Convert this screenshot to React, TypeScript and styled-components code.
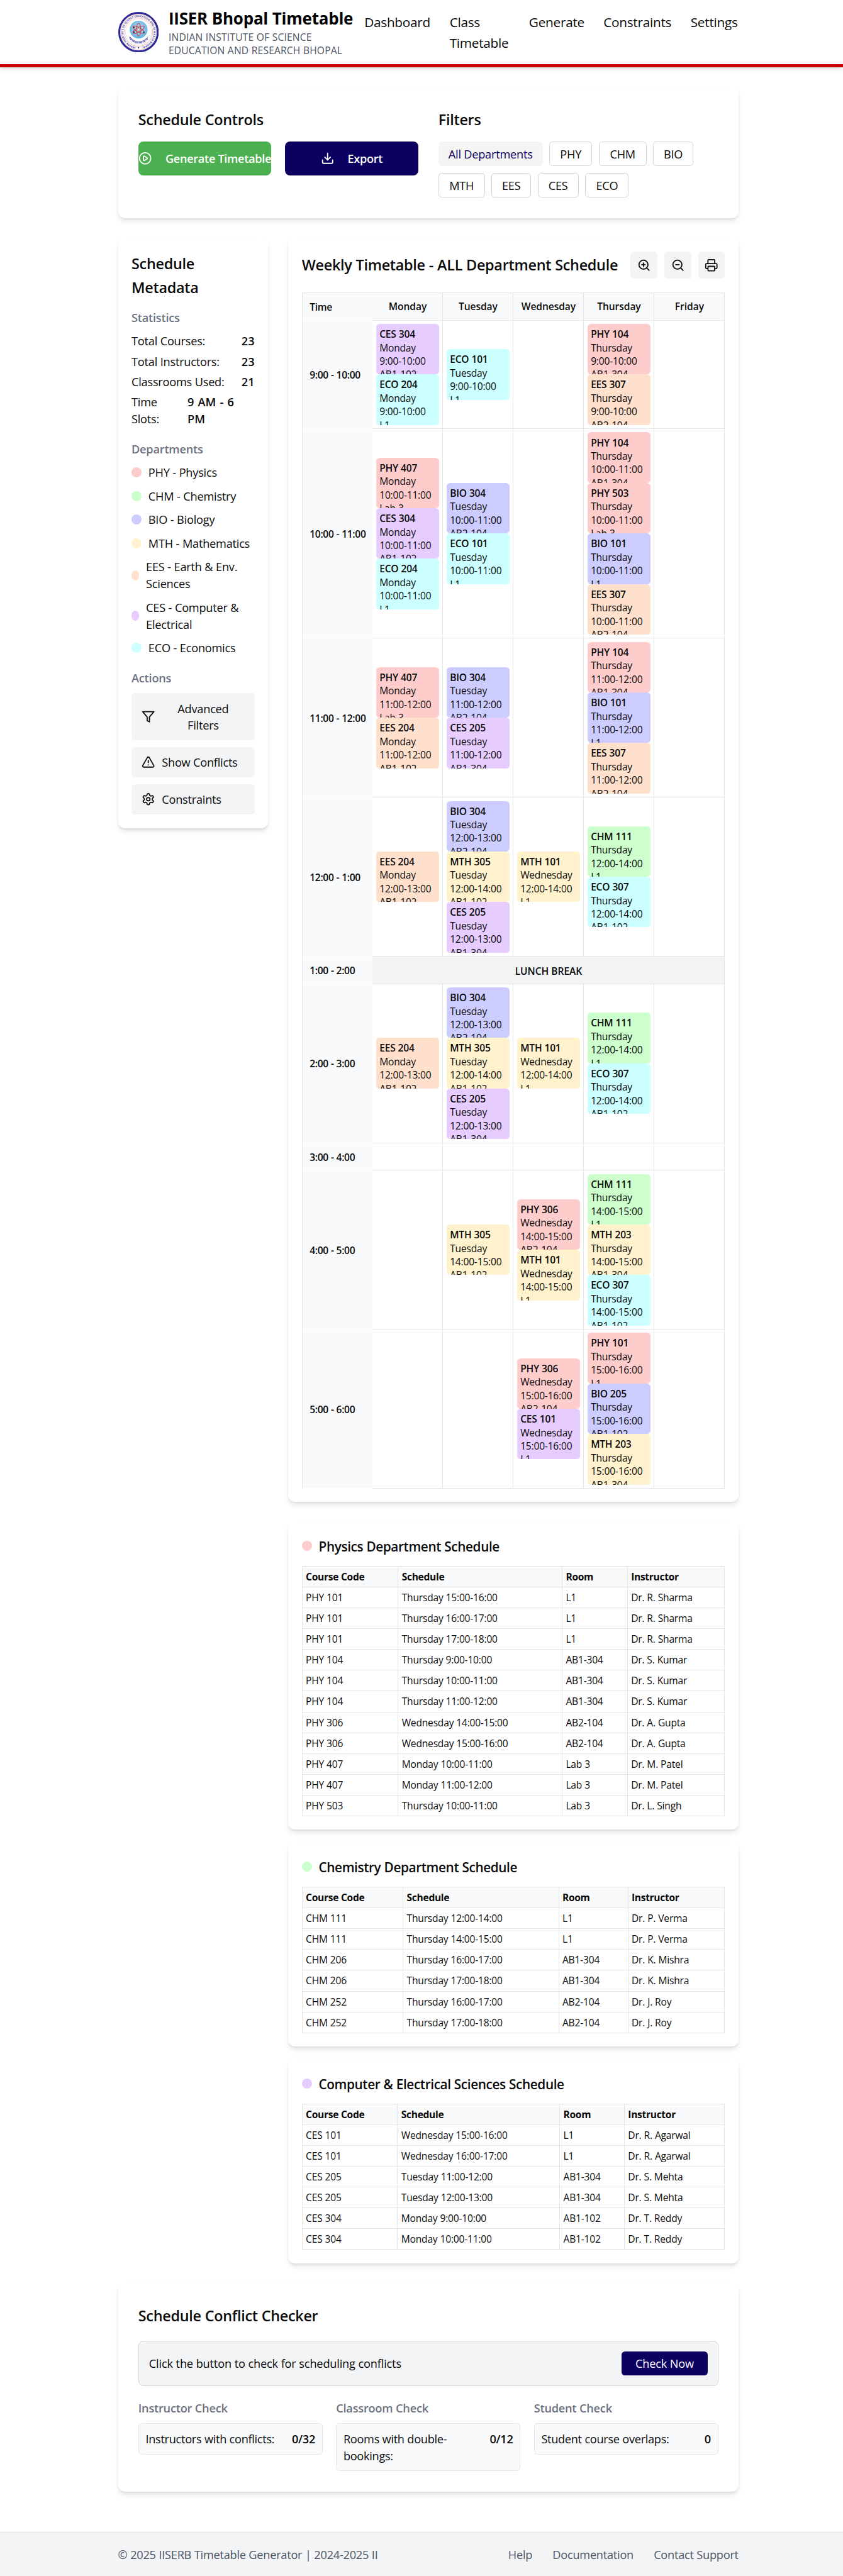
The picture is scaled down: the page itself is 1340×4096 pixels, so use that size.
import React from "react";
import styled, { createGlobalStyle, css } from "styled-components";
import { CirclePlay, Download, Printer, TriangleAlert, ZoomIn, ZoomOut } from "lucide-react";

const color = {
  ink: "#0a0a0a",
  navy: "#0c0060",
  red: "#cc0000",
  green: "#4caf50",
  muted: "#6b7280",
  slate: "#4b5563",
  panel: "#f3f4f6",
  soft: "#f9fafb",
  line: "#e5e5e5",
  border: "#d1d5db",
};

type Dept = "PHY" | "CHM" | "BIO" | "MTH" | "EES" | "CES" | "ECO";

const deptColor: Record<Dept, string> = {
  PHY: "#ffcccc",
  CHM: "#ccffcc",
  BIO: "#ccccff",
  MTH: "#fff2cc",
  EES: "#ffe0cc",
  CES: "#e6ccff",
  ECO: "#ccffff",
};

const type = (size: number, line: number, weight = 400, tracking = -0.013) => css`
  font-size: ${size * 0.97}px;
  line-height: ${line}px;
  font-weight: ${weight};
  letter-spacing: ${tracking}em;
`;

const shadow = css`
  box-shadow: 0 4px 6px -1px rgba(0, 0, 0, 0.1), 0 2px 4px -2px rgba(0, 0, 0, 0.1);
`;

const GlobalStyle = createGlobalStyle`
  *, *::before, *::after { box-sizing: border-box; }
  body {
    margin: 0;
    background: #fff;
    color: ${color.ink};
    font-family: "Open Sans", "Noto Sans", sans-serif;
    word-spacing: 0.01em;
  }
  h1, h2, h3, p, ul { margin: 0; padding: 0; }
  button { font: inherit; letter-spacing: inherit; color: inherit; border: 0; margin: 0; padding: 0; }
`;

const Page = styled.div`
  zoom: 1.34;
  width: 1000px;
  background: #fff;
`;

const Inner = styled.div`
  margin-left: 140px;
  width: 736px;
`;

/* ---------- header ---------- */

const Header = styled.header`
  height: 80px;
  border-bottom: 4px solid ${color.red};
  background: #fff;
  ${shadow}
`;

const HeaderRow = styled(Inner)`
  height: 76px;
  display: flex;
  align-items: center;
  justify-content: space-between;
`;

const Brand = styled.div`
  display: flex;
  align-items: center;
  gap: 12px;
`;

const BrandText = styled.div`
  width: 219px;
  padding-top: 1px;
`;

const BrandTitle = styled.h1`
  ${type(20, 28, 700, -0.009)}
  color: #000;
  white-space: nowrap;
`;

const BrandSub = styled.p`
  ${type(12, 16, 400, 0.012)}
  color: ${color.slate};
`;

const Nav = styled.nav`
  display: flex;
  gap: 24px;
  padding-top: 1px;
`;

const NavLink = styled.a<{ $w: number }>`
  ${type(16, 24)}
  width: ${(p) => p.$w}px;
`;

/* ---------- shared ---------- */

const Main = styled(Inner)`
  padding: 24px 0;
  display: flex;
  flex-direction: column;
  gap: 24px;
`;

const Card = styled.section<{ $pad?: number }>`
  padding: ${(p) => p.$pad ?? 16}px;
  border-radius: 8px;
  background: #fff;
  ${shadow}
`;

const Heading = styled.h2<{ $mb?: number }>`
  ${type(18, 28, 600, -0.012)}
  padding-top: 0.6px;
  margin-bottom: ${(p) => (p.$mb ?? 0.6) - 0.6}px;
`;

const SubHeading = styled.h3`
  ${type(14, 20, 600)}
  color: ${color.muted};
  padding-top: 0.5px;
  margin-bottom: 7.5px;
`;

const Dot = styled.span<{ $dept: Dept; $w?: number }>`
  flex: none;
  width: ${(p) => p.$w ?? 12}px;
  height: 12px;
  margin-top: -1px;
  border-radius: 50%;
  background: ${(p) => deptColor[p.$dept]};
`;

/* ---------- controls ---------- */

const ControlsCard = styled(Card)`
  height: 154.67px;
  display: grid;
  grid-template-columns: repeat(2, minmax(0, 1fr));
  gap: 24px;
`;

const ActionRow = styled.div`
  display: grid;
  grid-template-columns: repeat(2, minmax(0, 1fr));
  gap: 16px;
`;

const ActionButton = styled.button<{ $bg: string }>`
  ${type(14, 20, 600, -0.019)}
  height: 40px;
  padding-top: 1px;
  display: flex;
  align-items: center;
  justify-content: center;
  gap: 16px;
  border-radius: 6px;
  color: #fff;
  background: ${(p) => p.$bg};
  white-space: nowrap;

  svg {
    flex: none;
    margin-top: -1px;
  }
`;

const Pills = styled.div`
  display: flex;
  flex-wrap: wrap;
  gap: 8px;
`;

const Pill = styled.button<{ $w: number; $active?: boolean }>`
  ${type(14, 20)}
  width: ${(p) => p.$w}px;
  height: 29.33px;
  padding-top: 1px;
  border-radius: 4px;
  border: 1px solid ${(p) => (p.$active ? "#f4f4f3" : color.border)};
  background: ${(p) => (p.$active ? "#f4f4f3" : "#fff")};
  color: ${(p) => (p.$active ? color.navy : color.ink)};
  white-space: nowrap;
`;

/* ---------- sidebar ---------- */

const Columns = styled.div`
  display: grid;
  grid-template-columns: 178px 534px;
  gap: 24px;
  align-items: start;
`;

const Sidebar = styled(Card)`
  display: flex;
  flex-direction: column;
`;

const StatList = styled.div`
  ${type(14, 20)}
  display: flex;
  flex-direction: column;
  gap: 4px;
  padding-top: 0.5px;
  margin-bottom: 15.5px;
`;

const Stat = styled.div`
  display: flex;
  justify-content: space-between;
`;

const StatLabel = styled.span<{ $w?: number }>`
  width: ${(p) => (p.$w ? `${p.$w}px` : "auto")};
`;

const StatValue = styled.span<{ $w?: number }>`
  font-weight: 600;
  word-spacing: 0.08em;
  letter-spacing: 0;
  width: ${(p) => (p.$w ? `${p.$w}px` : "auto")};
`;

const DeptList = styled.ul`
  ${type(14, 20)}
  list-style: none;
  display: flex;
  flex-direction: column;
  gap: 8px;
  padding-top: 0.5px;
  margin-bottom: 15.5px;
`;

const DeptItem = styled.li`
  display: flex;
  align-items: center;
  gap: 8px;
`;

const SideActions = styled.div`
  display: flex;
  flex-direction: column;
  gap: 8px;
`;

const SideButton = styled.button`
  ${type(14, 20)}
  display: flex;
  align-items: center;
  gap: 8px;
  padding: 8.5px 12px 7.5px;
  border-radius: 4px;
  background: ${color.panel};

  svg {
    flex: none;
    margin-top: -1px;
  }
`;

const SideLabel = styled.span<{ $grow?: boolean }>`
  flex: ${(p) => (p.$grow ? 1 : "none")};
  text-align: center;
`;

/* ---------- weekly timetable ---------- */

const WeekHead = styled.div`
  display: flex;
  align-items: center;
  justify-content: space-between;
  height: 32px;
  margin-bottom: 16px;
`;

const IconButtons = styled.div`
  display: flex;
  gap: 8px;
`;

const IconButton = styled.button`
  width: 32px;
  height: 32px;
  display: flex;
  align-items: center;
  justify-content: center;
  border-radius: 4px;
  background: ${color.panel};
`;

const WeekGrid = styled.div`
  border-top: 1px solid ${color.line};
  border-left: 1px solid ${color.line};
`;

const WeekRow = styled.div<{ $h: number }>`
  display: grid;
  grid-template-columns: 83.4px repeat(5, minmax(0, 1fr));
  height: ${(p) => p.$h}px;
`;

const HeadCell = styled.div`
  ${type(12, 16, 600, -0.004)}
  display: flex;
  align-items: center;
  justify-content: center;
  padding-top: 1px;
  background: ${color.soft};
  border-right: 1px solid ${color.line};
  border-bottom: 1px solid ${color.line};
`;

const TimeCell = styled.div`
  ${type(12, 16, 600, -0.02)}
  display: flex;
  align-items: center;
  padding: 2px 0 0 8.6px;
  background: ${color.soft};
  border-bottom: 1px solid #fff;
  white-space: nowrap;
`;

const DayCell = styled.div`
  display: flex;
  flex-direction: column;
  justify-content: center;
  padding: 4px;
  border-right: 1px solid ${color.line};
  border-bottom: 1px solid ${color.line};
`;

const LunchCell = styled(HeadCell)`
  grid-column: 2 / -1;
  padding-top: 3px;
  background: ${color.panel};
`;

const EventBox = styled.div<{ $dept: Dept }>`
  ${type(12, 16)}
  height: 60px;
  padding: 4.5px 4px 0;
  overflow: hidden;
  border-radius: 4px;
  white-space: nowrap;
  background: ${(p) => deptColor[p.$dept]};
`;

const EventCode = styled.div`
  font-weight: 600;
`;

/* ---------- department tables ---------- */

const MainColumn = styled.div`
  display: flex;
  flex-direction: column;
`;

const WeekCard = styled(Card)`
  margin-bottom: 24px;
`;

const DeptCard = styled(Card)`
  margin-bottom: 16px;
  &:last-child {
    margin-bottom: 0;
  }
`;

const DeptTitle = styled.h3`
  ${type(16, 24, 600, -0.019)}
  display: flex;
  align-items: center;
  gap: 8px;
  padding-top: 0.5px;
  margin-bottom: 11.5px;
`;

const Sheet = styled.div`
  border-top: 1px solid ${color.line};
  border-left: 1px solid ${color.line};
`;

const SheetRow = styled.div<{ $cols: string; $head?: boolean }>`
  ${type(12, 16)}
  font-weight: ${(p) => (p.$head ? 700 : 400)};
  letter-spacing: ${(p) => (p.$head ? -0.02 : -0.013)}em;
  background: ${(p) => (p.$head ? color.soft : "#fff")};
  display: grid;
  grid-template-columns: ${(p) => p.$cols};
  height: 24.67px;
`;

const SheetCell = styled.div`
  padding: 4.5px 4px 0;
  border-right: 1px solid ${color.line};
  border-bottom: 1px solid ${color.line};
  white-space: nowrap;
`;

/* ---------- conflict checker ---------- */

const CheckBanner = styled.div`
  ${type(14, 20, 400, -0.01)}
  height: 53.33px;
  padding: 0 12px;
  margin-bottom: 16px;
  display: flex;
  align-items: center;
  justify-content: space-between;
  border: 1px solid ${color.border};
  border-radius: 6px;
  background: ${color.panel};
`;

const BannerText = styled.span`
  padding-top: 1px;
`;

const CheckButton = styled.button`
  width: 101.8px;
  height: 28px;
  padding-top: 1px;
  border-radius: 4px;
  color: #fff;
  background: ${color.navy};
`;

const CheckGrid = styled.div`
  display: grid;
  grid-template-columns: repeat(3, 1fr);
  gap: 16px;
`;

const CheckBox = styled.div<{ $h: number }>`
  ${type(14, 20, 400, -0.017)}
  height: ${(p) => p.$h}px;
  padding: 8.5px 8px 0;
  display: flex;
  justify-content: space-between;
  border: 1px solid ${color.line};
  border-radius: 4px;
  background: ${color.soft};
`;

const CheckLabel = styled.span`
  max-width: 160px;
  white-space: nowrap;
`;

const CheckValue = styled.span`
  font-weight: 600;
`;

/* ---------- footer ---------- */

const Footer = styled.footer`
  margin-top: 24px;
  height: 52.7px;
  padding-top: 16.5px;
  border-top: 1px solid ${color.line};
  background: ${color.panel};
`;

const FooterRow = styled(Inner)`
  ${type(14, 20, 400, -0.014)}
  display: flex;
  justify-content: space-between;
  color: ${color.slate};
`;

const FooterLinks = styled.div`
  display: flex;
  gap: 24px;
`;

/* ---------- drawings ---------- */

const Seal = () => (
  <svg width="48" height="48" viewBox="0 0 72 72">
    <defs>
      <radialGradient id="disc" cx="50%" cy="45%" r="55%">
        <stop offset="0" stopColor="#b9e2f7" />
        <stop offset="0.6" stopColor="#84c6ea" />
        <stop offset="1" stopColor="#5cb0e0" />
      </radialGradient>
      <path id="sealText" d="M 31 62.5 A 27 27 0 1 1 41 62.5" />
    </defs>
    <circle cx="36" cy="36" r="34.3" fill="#fff" stroke="#2c2b96" strokeWidth="3.4" />
    <circle cx="36" cy="36" r="31.8" fill="none" stroke="#e9a9a4" strokeWidth="0.9" />
    <circle cx="36" cy="36" r="25.2" fill="none" stroke="#eeb4ae" strokeWidth="1" />
    <circle cx="36" cy="36" r="23.2" fill="none" stroke="#f4d2cf" strokeWidth="0.7" />
    <text fontFamily="Open Sans, sans-serif" fontSize="4.6" fontWeight="700" fill="#3f3e9e" letterSpacing="0">
      <textPath href="#sealText" textLength="158">INDIAN INSTITUTE OF SCIENCE EDUCATION AND RESEARCH BHOPAL</textPath>
    </text>
    <circle cx="36" cy="63.6" r="1.3" fill="#2c2b96" />
    <circle cx="36.2" cy="31.4" r="15.8" fill="url(#disc)" />
    <g fill="none" stroke="#c4434a" strokeWidth="1.2">
      <ellipse cx="36.2" cy="31.6" rx="4" ry="11.4" />
      <ellipse cx="36.2" cy="31.6" rx="4" ry="11.4" transform="rotate(60 36.2 31.6)" />
      <ellipse cx="36.2" cy="31.6" rx="4" ry="11.4" transform="rotate(120 36.2 31.6)" />
    </g>
    <circle cx="36.2" cy="31.6" r="2" fill="#e8f4fb" stroke="#c4434a" strokeWidth="0.6" />
    <circle cx="28" cy="27.5" r="1.3" fill="#222" />
    <circle cx="28" cy="36" r="1.3" fill="#222" />
    <circle cx="45.4" cy="36.6" r="1.3" fill="#222" />
    <path d="M 19.6 43.6 Q 27 53.2 36.4 53.4 Q 46 53 52.8 44.4" fill="none" stroke="#3a399c" strokeWidth="0.9" />
    <path
      d="M 20.4 45.6 Q 27 54.6 36.4 54.9 Q 46 54.4 52.4 46.4"
      fill="none"
      stroke="#4a49a6"
      strokeWidth="3"
      strokeDasharray="1.1 1 1.7 0.8 0.8 1.2"
    />
  </svg>
);

const Stroke = ({ children }: { children: React.ReactNode }) => (
  <svg
    width="16"
    height="16"
    viewBox="0 0 24 24"
    fill="none"
    stroke="currentColor"
    strokeWidth="2"
    strokeLinecap="round"
    strokeLinejoin="round"
  >
    {children}
  </svg>
);

const FilterIcon = () => (
  <Stroke>
    <polygon points="22 3 2 3 10 12.46 10 19 14 21 14 12.46 22 3" />
  </Stroke>
);

const GearIcon = () => (
  <Stroke>
    <path d="M12.22 2h-.44a2 2 0 0 0-2 2v.18a2 2 0 0 1-1 1.73l-.43.25a2 2 0 0 1-2 0l-.15-.08a2 2 0 0 0-2.73.73l-.22.38a2 2 0 0 0 .73 2.73l.15.1a2 2 0 0 1 1 1.72v.51a2 2 0 0 1-1 1.74l-.15.09a2 2 0 0 0-.73 2.73l.22.38a2 2 0 0 0 2.73.73l.15-.08a2 2 0 0 1 2 0l.43.25a2 2 0 0 1 1 1.73V20a2 2 0 0 0 2 2h.44a2 2 0 0 0 2-2v-.18a2 2 0 0 1 1-1.73l.43-.25a2 2 0 0 1 2 0l.15.08a2 2 0 0 0 2.73-.73l.22-.39a2 2 0 0 0-.73-2.73l-.15-.08a2 2 0 0 1-1-1.74v-.5a2 2 0 0 1 1-1.74l.15-.09a2 2 0 0 0 .73-2.73l-.22-.38a2 2 0 0 0-2.73-.73l-.15.08a2 2 0 0 1-2 0l-.43-.25a2 2 0 0 1-1-1.73V4a2 2 0 0 0-2-2z" />
    <circle cx="12" cy="12" r="3" />
  </Stroke>
);

/* ---------- data ---------- */

const navItems: [string, number][] = [
  ["Dashboard", 77.1],
  ["Class Timetable", 70.2],
  ["Generate", 64.3],
  ["Constraints", 79.4],
  ["Settings", 56.8],
];

const pills: [string, number][] = [
  ["All Departments", 123.8],
  ["PHY", 50.5],
  ["CHM", 56.6],
  ["BIO", 47.4],
  ["MTH", 55.2],
  ["EES", 46.6],
  ["CES", 48.6],
  ["ECO", 51.4],
];

const departments: [Dept, string, number?][] = [
  ["PHY", "PHY - Physics"],
  ["CHM", "CHM - Chemistry"],
  ["BIO", "BIO - Biology"],
  ["MTH", "MTH - Mathematics"],
  ["EES", "EES - Earth & Env. Sciences", 9.2],
  ["CES", "CES - Computer & Electrical", 9.2],
  ["ECO", "ECO - Economics"],
];

const days = ["Monday", "Tuesday", "Wednesday", "Thursday", "Friday"];

type Slot = { time: string; lunch?: boolean; cells?: string[][] };

// Each entry is "code|hours|room", listed by weekday.
const slots: Slot[] = [
  {
    time: "9:00 - 10:00",
    cells: [
      ["CES 304|9:00-10:00|AB1-102", "ECO 204|9:00-10:00|L1"],
      ["ECO 101|9:00-10:00|L1"],
      [],
      ["PHY 104|9:00-10:00|AB1-304", "EES 307|9:00-10:00|AB2-104"],
      [],
    ],
  },
  {
    time: "10:00 - 11:00",
    cells: [
      ["PHY 407|10:00-11:00|Lab 3", "CES 304|10:00-11:00|AB1-102", "ECO 204|10:00-11:00|L1"],
      ["BIO 304|10:00-11:00|AB2-104", "ECO 101|10:00-11:00|L1"],
      [],
      ["PHY 104|10:00-11:00|AB1-304", "PHY 503|10:00-11:00|Lab 3", "BIO 101|10:00-11:00|L1", "EES 307|10:00-11:00|AB2-104"],
      [],
    ],
  },
  {
    time: "11:00 - 12:00",
    cells: [
      ["PHY 407|11:00-12:00|Lab 3", "EES 204|11:00-12:00|AB1-102"],
      ["BIO 304|11:00-12:00|AB2-104", "CES 205|11:00-12:00|AB1-304"],
      [],
      ["PHY 104|11:00-12:00|AB1-304", "BIO 101|11:00-12:00|L1", "EES 307|11:00-12:00|AB2-104"],
      [],
    ],
  },
  {
    time: "12:00 - 1:00",
    cells: [
      ["EES 204|12:00-13:00|AB1-102"],
      ["BIO 304|12:00-13:00|AB2-104", "MTH 305|12:00-14:00|AB1-102", "CES 205|12:00-13:00|AB1-304"],
      ["MTH 101|12:00-14:00|L1"],
      ["CHM 111|12:00-14:00|L1", "ECO 307|12:00-14:00|AB1-102"],
      [],
    ],
  },
  { time: "1:00 - 2:00", lunch: true },
  {
    time: "2:00 - 3:00",
    cells: [
      ["EES 204|12:00-13:00|AB1-102"],
      ["BIO 304|12:00-13:00|AB2-104", "MTH 305|12:00-14:00|AB1-102", "CES 205|12:00-13:00|AB1-304"],
      ["MTH 101|12:00-14:00|L1"],
      ["CHM 111|12:00-14:00|L1", "ECO 307|12:00-14:00|AB1-102"],
      [],
    ],
  },
  { time: "3:00 - 4:00", cells: [[], [], [], [], []] },
  {
    time: "4:00 - 5:00",
    cells: [
      [],
      ["MTH 305|14:00-15:00|AB1-102"],
      ["PHY 306|14:00-15:00|AB2-104", "MTH 101|14:00-15:00|L1"],
      ["CHM 111|14:00-15:00|L1", "MTH 203|14:00-15:00|AB1-304", "ECO 307|14:00-15:00|AB1-102"],
      [],
    ],
  },
  {
    time: "5:00 - 6:00",
    cells: [
      [],
      [],
      ["PHY 306|15:00-16:00|AB2-104", "CES 101|15:00-16:00|L1"],
      ["PHY 101|15:00-16:00|L1", "BIO 205|15:00-16:00|AB1-102", "MTH 203|15:00-16:00|AB1-304"],
      [],
    ],
  },
];

const rowHeight = (slot: Slot) => {
  const most = Math.max(0, ...(slot.cells ?? []).map((c) => c.length));
  return most ? most * 60 + 8.67 : 32.67;
};

const sheets: { dept: Dept; title: string; cols: string; rows: string[][] }[] = [
  {
    dept: "PHY",
    title: "Physics Department Schedule",
    cols: "113.9px 194.6px 77.4px 1fr",
    rows: [
      ["PHY 101", "Thursday 15:00-16:00", "L1", "Dr. R. Sharma"],
      ["PHY 101", "Thursday 16:00-17:00", "L1", "Dr. R. Sharma"],
      ["PHY 101", "Thursday 17:00-18:00", "L1", "Dr. R. Sharma"],
      ["PHY 104", "Thursday 9:00-10:00", "AB1-304", "Dr. S. Kumar"],
      ["PHY 104", "Thursday 10:00-11:00", "AB1-304", "Dr. S. Kumar"],
      ["PHY 104", "Thursday 11:00-12:00", "AB1-304", "Dr. S. Kumar"],
      ["PHY 306", "Wednesday 14:00-15:00", "AB2-104", "Dr. A. Gupta"],
      ["PHY 306", "Wednesday 15:00-16:00", "AB2-104", "Dr. A. Gupta"],
      ["PHY 407", "Monday 10:00-11:00", "Lab 3", "Dr. M. Patel"],
      ["PHY 407", "Monday 11:00-12:00", "Lab 3", "Dr. M. Patel"],
      ["PHY 503", "Thursday 10:00-11:00", "Lab 3", "Dr. L. Singh"],
    ],
  },
  {
    dept: "CHM",
    title: "Chemistry Department Schedule",
    cols: "119.8px 184.6px 82.1px 1fr",
    rows: [
      ["CHM 111", "Thursday 12:00-14:00", "L1", "Dr. P. Verma"],
      ["CHM 111", "Thursday 14:00-15:00", "L1", "Dr. P. Verma"],
      ["CHM 206", "Thursday 16:00-17:00", "AB1-304", "Dr. K. Mishra"],
      ["CHM 206", "Thursday 17:00-18:00", "AB1-304", "Dr. K. Mishra"],
      ["CHM 252", "Thursday 16:00-17:00", "AB2-104", "Dr. J. Roy"],
      ["CHM 252", "Thursday 17:00-18:00", "AB2-104", "Dr. J. Roy"],
    ],
  },
  {
    dept: "CES",
    title: "Computer & Electrical Sciences Schedule",
    cols: "113.2px 192.4px 76.7px 1fr",
    rows: [
      ["CES 101", "Wednesday 15:00-16:00", "L1", "Dr. R. Agarwal"],
      ["CES 101", "Wednesday 16:00-17:00", "L1", "Dr. R. Agarwal"],
      ["CES 205", "Tuesday 11:00-12:00", "AB1-304", "Dr. S. Mehta"],
      ["CES 205", "Tuesday 12:00-13:00", "AB1-304", "Dr. S. Mehta"],
      ["CES 304", "Monday 9:00-10:00", "AB1-102", "Dr. T. Reddy"],
      ["CES 304", "Monday 10:00-11:00", "AB1-102", "Dr. T. Reddy"],
    ],
  },
];

/* ---------- pieces ---------- */

const CourseEvent = ({ entry, day }: { entry: string; day: string }) => {
  const [code, hours, room] = entry.split("|");
  return (
    <EventBox $dept={code.slice(0, 3) as Dept}>
      <EventCode>{code}</EventCode>
      <div>{day}</div>
      <div>{hours}</div>
      <div>{room}</div>
    </EventBox>
  );
};

const Week = () => (
  <WeekGrid>
    <WeekRow $h={33}>
      <TimeCell>Time</TimeCell>
      {days.map((d) => (
        <HeadCell key={d}>{d}</HeadCell>
      ))}
    </WeekRow>
    {slots.map((slot) => (
      <WeekRow key={slot.time} $h={rowHeight(slot)}>
        <TimeCell>{slot.time}</TimeCell>
        {slot.lunch ? (
          <LunchCell>LUNCH BREAK</LunchCell>
        ) : (
          slot.cells!.map((entries, i) => (
            <DayCell key={i}>
              {entries.map((e) => (
                <CourseEvent key={e} entry={e} day={days[i]} />
              ))}
            </DayCell>
          ))
        )}
      </WeekRow>
    ))}
  </WeekGrid>
);

export default function App() {
  return (
    <Page>
      <GlobalStyle />
      <Header>
        <HeaderRow>
          <Brand>
            <Seal />
            <BrandText>
              <BrandTitle>IISER Bhopal Timetable</BrandTitle>
              <BrandSub>INDIAN INSTITUTE OF SCIENCE EDUCATION AND RESEARCH BHOPAL</BrandSub>
            </BrandText>
          </Brand>
          <Nav>
            {navItems.map(([label, w]) => (
              <NavLink key={label} $w={w}>
                {label}
              </NavLink>
            ))}
          </Nav>
        </HeaderRow>
      </Header>

      <Main as="main">
        <ControlsCard $pad={24}>
          <div>
            <Heading $mb={12}>Schedule Controls</Heading>
            <ActionRow>
              <ActionButton $bg={color.green}>
                <CirclePlay size={16} />
                Generate Timetable
              </ActionButton>
              <ActionButton $bg={color.navy}>
                <Download size={16} />
                Export
              </ActionButton>
            </ActionRow>
          </div>
          <div>
            <Heading $mb={12}>Filters</Heading>
            <Pills>
              {pills.map(([label, w], i) => (
                <Pill key={label} $w={w} $active={i === 0}>
                  {label}
                </Pill>
              ))}
            </Pills>
          </div>
        </ControlsCard>

        <Columns>
          <Sidebar as="aside">
            <Heading $mb={12}>Schedule Metadata</Heading>
            <SubHeading>Statistics</SubHeading>
            <StatList>
              <Stat>
                <StatLabel>Total Courses:</StatLabel>
                <StatValue>23</StatValue>
              </Stat>
              <Stat>
                <StatLabel>Total Instructors:</StatLabel>
                <StatValue>23</StatValue>
              </Stat>
              <Stat>
                <StatLabel>Classrooms Used:</StatLabel>
                <StatValue>21</StatValue>
              </Stat>
              <Stat>
                <StatLabel $w={40}>Time Slots:</StatLabel>
                <StatValue $w={79.6}>
                  9 AM - 6
                  <br />
                  PM
                </StatValue>
              </Stat>
            </StatList>
            <SubHeading>Departments</SubHeading>
            <DeptList>
              {departments.map(([dept, label, w]) => (
                <DeptItem key={dept}>
                  <Dot $dept={dept} $w={w} />
                  {label}
                </DeptItem>
              ))}
            </DeptList>
            <SubHeading>Actions</SubHeading>
            <SideActions>
              <SideButton>
                <FilterIcon />
                <SideLabel $grow>
                  Advanced
                  <br />
                  Filters
                </SideLabel>
              </SideButton>
              <SideButton>
                <TriangleAlert size={16} />
                <SideLabel>Show Conflicts</SideLabel>
              </SideButton>
              <SideButton>
                <GearIcon />
                <SideLabel>Constraints</SideLabel>
              </SideButton>
            </SideActions>
          </Sidebar>

          <MainColumn>
            <WeekCard>
              <WeekHead>
                <Heading>Weekly Timetable - ALL Department Schedule</Heading>
                <IconButtons>
                  <IconButton>
                    <ZoomIn size={16} />
                  </IconButton>
                  <IconButton>
                    <ZoomOut size={16} />
                  </IconButton>
                  <IconButton>
                    <Printer size={16} />
                  </IconButton>
                </IconButtons>
              </WeekHead>
              <Week />
            </WeekCard>

            {sheets.map((sheet) => (
              <DeptCard key={sheet.dept}>
                <DeptTitle>
                  <Dot $dept={sheet.dept} />
                  {sheet.title}
                </DeptTitle>
                <Sheet>
                  <SheetRow $cols={sheet.cols} $head>
                    {["Course Code", "Schedule", "Room", "Instructor"].map((h) => (
                      <SheetCell key={h}>{h}</SheetCell>
                    ))}
                  </SheetRow>
                  {sheet.rows.map((row) => (
                    <SheetRow key={row[0] + row[1]} $cols={sheet.cols}>
                      {row.map((cell, i) => (
                        <SheetCell key={i}>{cell}</SheetCell>
                      ))}
                    </SheetRow>
                  ))}
                </Sheet>
              </DeptCard>
            ))}
          </MainColumn>
        </Columns>

        <Card $pad={24}>
          <Heading $mb={16}>Schedule Conflict Checker</Heading>
          <CheckBanner>
            <BannerText>Click the button to check for scheduling conflicts</BannerText>
            <CheckButton>Check Now</CheckButton>
          </CheckBanner>
          <CheckGrid>
            <div>
              <SubHeading>Instructor Check</SubHeading>
              <CheckBox $h={37.33}>
                <CheckLabel>Instructors with conflicts:</CheckLabel>
                <CheckValue>0/32</CheckValue>
              </CheckBox>
            </div>
            <div>
              <SubHeading>Classroom Check</SubHeading>
              <CheckBox $h={57.33}>
                <CheckLabel>
                  Rooms with double-
                  <br />
                  bookings:
                </CheckLabel>
                <CheckValue>0/12</CheckValue>
              </CheckBox>
            </div>
            <div>
              <SubHeading>Student Check</SubHeading>
              <CheckBox $h={37.33}>
                <CheckLabel>Student course overlaps:</CheckLabel>
                <CheckValue>0</CheckValue>
              </CheckBox>
            </div>
          </CheckGrid>
        </Card>
      </Main>

      <Footer>
        <FooterRow>
          <span>© 2025 IISERB Timetable Generator | 2024-2025 II</span>
          <FooterLinks>
            <span>Help</span>
            <span>Documentation</span>
            <span>Contact Support</span>
          </FooterLinks>
        </FooterRow>
      </Footer>
    </Page>
  );
}
